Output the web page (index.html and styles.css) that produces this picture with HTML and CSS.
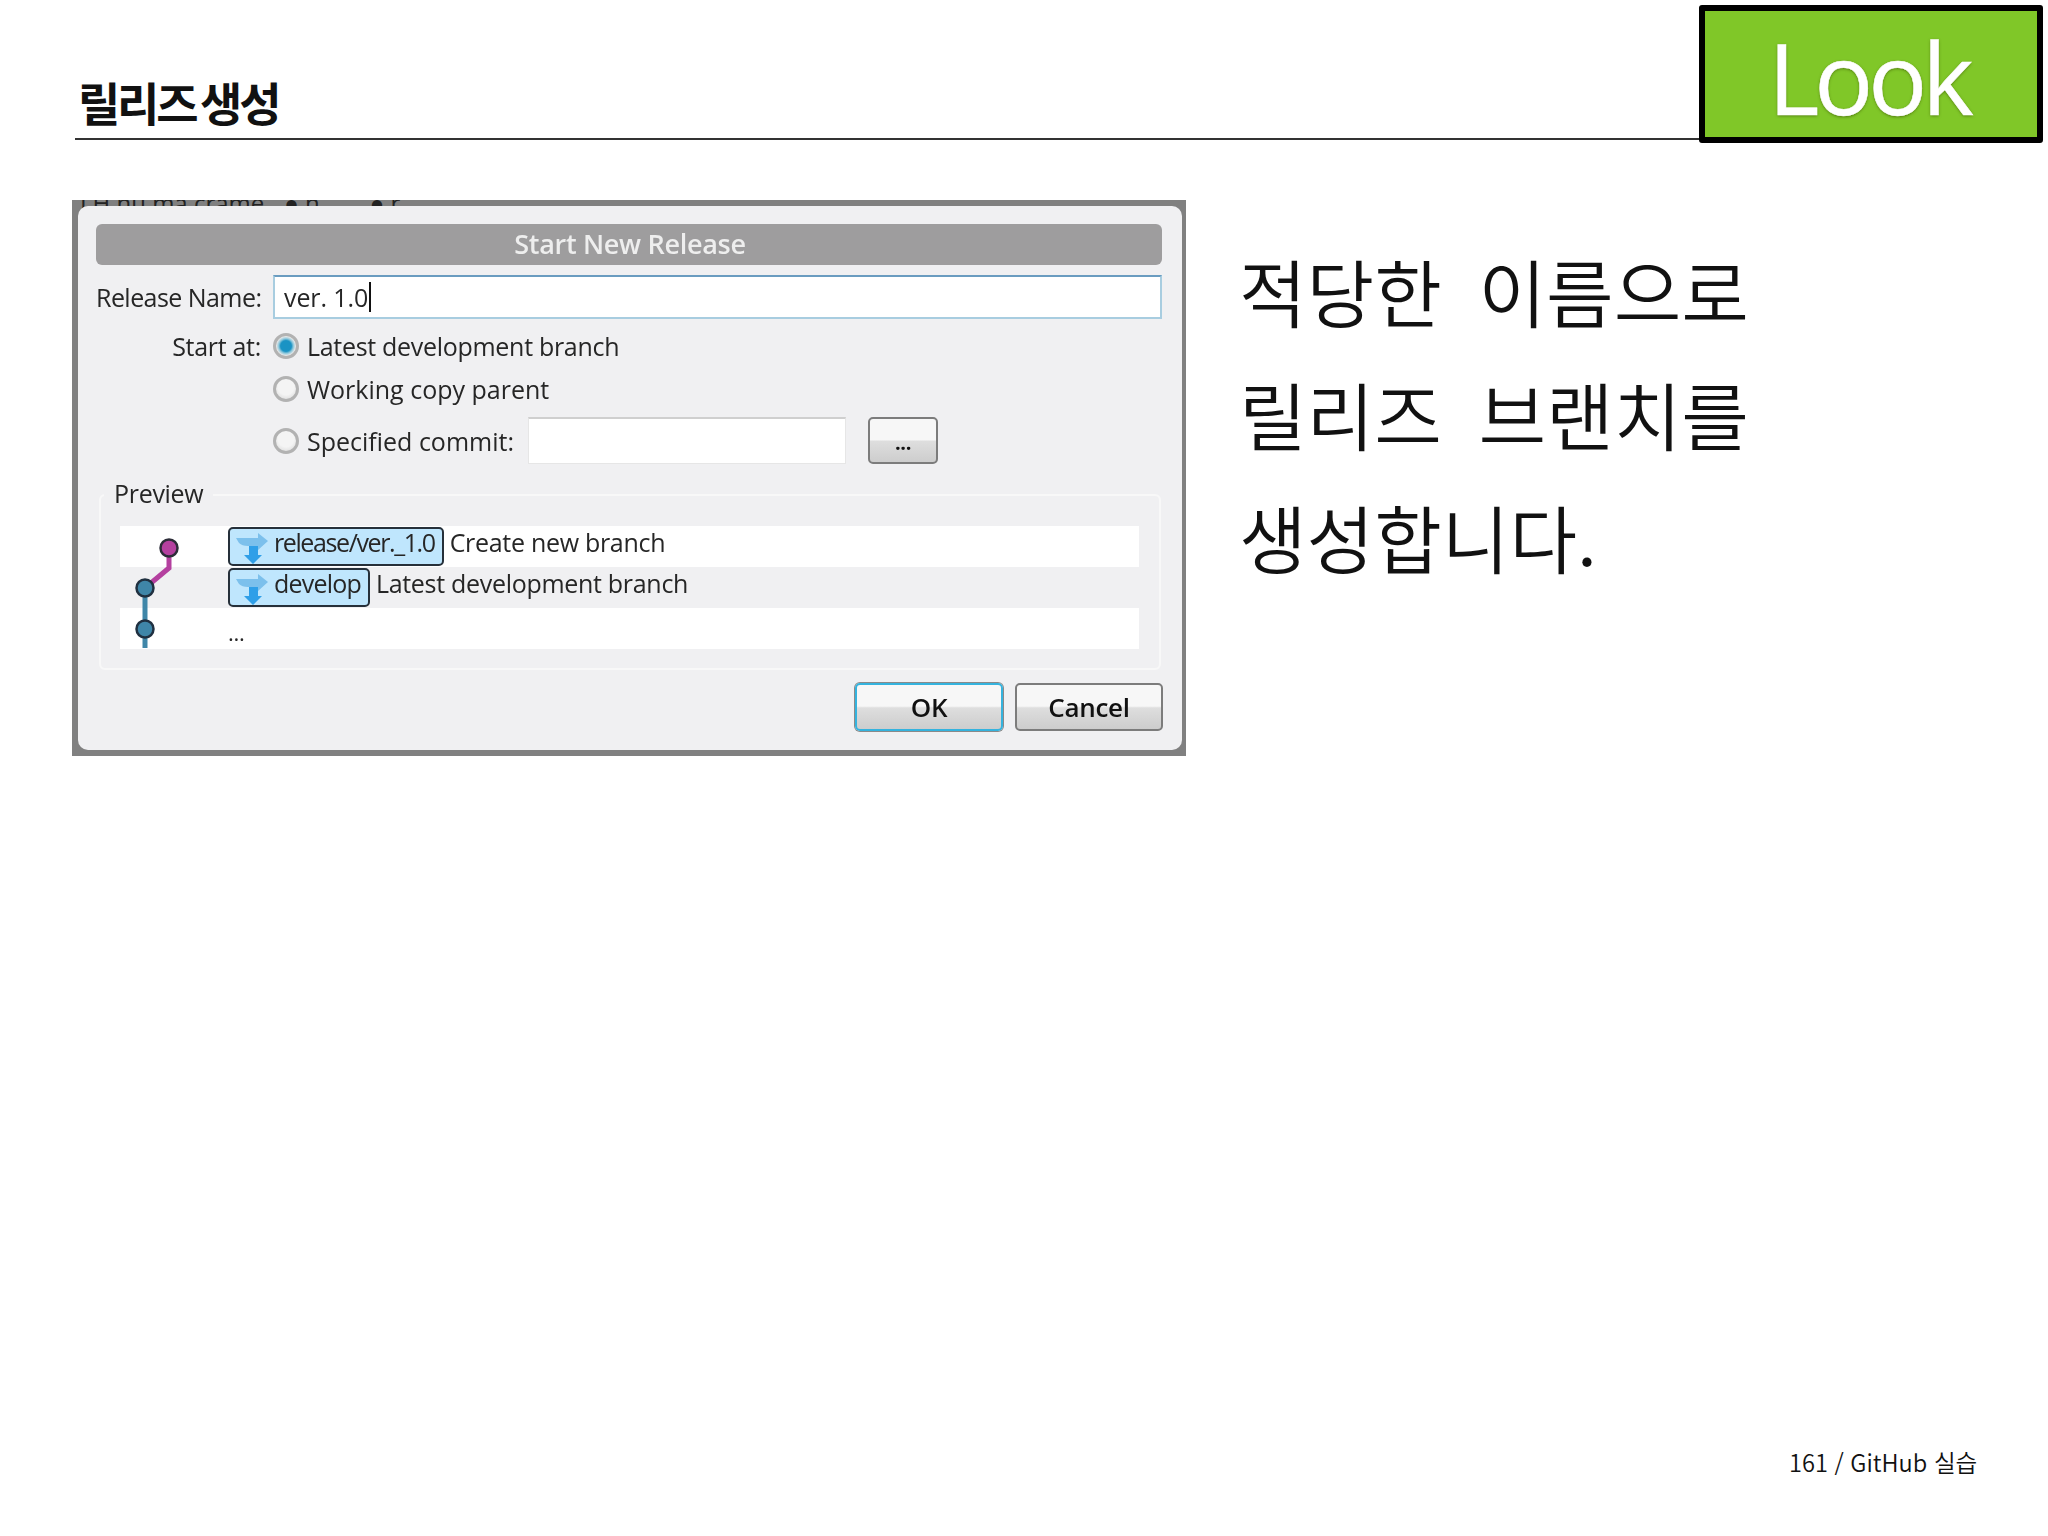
FILE: index.html
```html
<!DOCTYPE html>
<html lang="ko">
<head>
<meta charset="utf-8">
<title>릴리즈 생성</title>
<link rel="stylesheet" href="styles.css">
</head>
<body>
<div class="slide">
  <header class="head">
    <div class="head-title"><h1>릴리즈 생성</h1></div>
    <div class="look">Look</div>
  </header>
  <main class="content">
    <section class="shot">
      <div class="behind"><span>LH nu ma crame</span><span class="dot1">&#9679; n</span><span class="dot2">&#9679; r</span></div>
      <div class="dialog">
        <div class="titlebar">Start New Release</div>
        <div class="row name-row">
          <span class="label snug">Release Name:</span>
          <div class="field focus"><span class="value">ver. 1.0</span><i class="caret"></i></div>
        </div>
        <div class="row start-row">
          <span class="label">Start at:</span>
          <span class="radio on"></span><span>Latest development branch</span>
        </div>
        <div class="row work-row">
          <span class="label"></span>
          <span class="radio"></span><span class="wide">Working copy parent</span>
        </div>
        <div class="row spec-row">
          <span class="label"></span>
          <span class="radio"></span><span class="wide">Specified commit:</span>
          <div class="field spec"></div>
          <div class="btn dots">...</div>
        </div>
        <fieldset class="preview">
          <legend>Preview</legend>
          <div class="rows">
            <svg class="graph" width="70" height="122" viewBox="0 0 70 122">
              <path d="M49 22V42L25 62" fill="none" stroke="#b4409f" stroke-width="5"/>
              <path d="M25 62V122" fill="none" stroke="#3f86a8" stroke-width="5"/>
              <circle cx="49" cy="22" r="8.5" fill="#b4409f" stroke="#2c2c38" stroke-width="2.5"/>
              <circle cx="25" cy="62" r="8.5" fill="#3f86a8" stroke="#203040" stroke-width="2.5"/>
              <circle cx="25" cy="103" r="8.5" fill="#3f86a8" stroke="#203040" stroke-width="2.5"/>
            </svg>
            <div class="line odd">
              <span class="tag tight">
                <svg class="flow" width="33" height="32" viewBox="0 0 33 32"><path d="M13 12H22V22H26L17 31L8 22H13Z" fill="#2f9fe8"/><path d="M0 5H22V0L32 8L22 17V13H12Q6 13 3 10Z" fill="#7cc0ec"/></svg>
                <span>release/ver._1.0</span>
              </span>
              <span>Create new branch</span>
            </div>
            <div class="line">
              <span class="tag">
                <svg class="flow" width="33" height="32" viewBox="0 0 33 32"><path d="M13 12H22V22H26L17 31L8 22H13Z" fill="#2f9fe8"/><path d="M0 5H22V0L32 8L22 17V13H12Q6 13 3 10Z" fill="#7cc0ec"/></svg>
                <span>develop</span>
              </span>
              <span>Latest development branch</span>
            </div>
            <div class="line odd"><span class="more">...</span></div>
          </div>
        </fieldset>
        <div class="actions">
          <div class="btn ok">OK</div>
          <div class="btn">Cancel</div>
        </div>
      </div>
    </section>
    <section class="note">
      <p>적당한 이름으로</p>
      <p>릴리즈 브랜치를</p>
      <p>생성합니다.</p>
    </section>
  </main>
  <footer class="foot">161 / GitHub 실습</footer>
</div>
</body>
</html>
```
FILE: styles.css
```css
* { box-sizing: border-box; }
html, body { margin: 0; background: #fff; }
body { font-family: "Noto Sans CJK KR", "Noto Sans", sans-serif; color: #111; }
.slide { width: 2048px; height: 1536px; display: flex; flex-direction: column; overflow: hidden; }

.head { display: flex; align-items: flex-end; padding: 5px 5px 0 75px; height: 143px; flex: none; }
.head-title { flex: 1; height: 136px; display: flex; align-items: flex-end; border-bottom: 2px solid #333; margin-bottom: 3px; padding-left: 3px; }
.head-title h1 { margin: 0 0 4px; font-size: 46px; font-weight: 700; letter-spacing: -3.2px; word-spacing: -5px; line-height: 66px; color: #111; }
.look { width: 344px; height: 138px; padding-right: 5px; background: #80c728; border: 6px solid #000; border-radius: 3px; color: #fff; font-family: "Open Sans", sans-serif; font-size: 98px; line-height: 132px; text-align: center; letter-spacing: -5px; -webkit-text-stroke: .5px #fff; text-shadow: 0 1px 3px rgba(60,90,0,.7); }

.content { display: flex; flex: 1; padding: 57px 0 0 72px; align-items: flex-start; }
.shot { width: 1114px; height: 556px; background: #808080; padding: 6px 4px 6px 6px; position: relative; overflow: hidden; flex: none; }
.behind { position: absolute; left: 8px; top: -14px; display: flex; font: 24px "Open Sans", sans-serif; color: #222; white-space: nowrap; }
.dot1 { margin-left: 20px; }
.dot2 { margin-left: 50px; }
.dialog { height: 100%; background: #f0f0f2; border-radius: 10px; padding: 18px 20px 0 18px; font-family: "Open Sans", sans-serif; font-size: 25px; letter-spacing: -.3px; color: #262626; position: relative; display: flex; flex-direction: column; filter: blur(.5px); }

.titlebar { height: 41px; background: #9e9d9e; border-radius: 6px; color: #eee; font-weight: 600; font-size: 27px; line-height: 39px; text-align: center; padding-left: 2px; flex: none; }
.row { display: flex; align-items: center; white-space: nowrap; flex: none; }
.label { width: 165px; text-align: right; margin-right: 12px; flex: none; }
.snug { letter-spacing: -.55px; }
.wide { letter-spacing: 0; }
.value { letter-spacing: -.1px; }
.name-row { height: 44px; margin-top: 10px; }
.field { background: #fff; height: 100%; }
.field.focus { width: 891px; border: 2px solid #a8cde0; border-top-color: #6a9cc0; padding-left: 9px; display: flex; align-items: center; }
.caret { width: 2px; height: 30px; background: #111; margin-left: 1px; }
.start-row { height: 38px; margin-top: 8px; }
.work-row { height: 38px; margin-top: 5px; }
.spec-row { height: 47px; margin-top: 9px; }
.radio { width: 26px; height: 26px; margin-right: 8px; border-radius: 50%; border: 3px solid #b2b2b2; background: radial-gradient(circle at 50% 40%, #f4f4f4 0 50%, #d4d4d4 100%); flex: none; }
.radio.on { background: radial-gradient(circle, #1a93c4 0 38%, #8fc8dc 52%, #e8e8e8 68%); }
.spec { width: 318px; margin-left: 14px; border: 1px solid #e6e6e6; border-top: 2px solid #cfcfcf; }
.btn { width: 148px; height: 48px; border: 2px solid #7c7c7c; border-radius: 5px; background: linear-gradient(#f7f7f7 0 48%, #dedede 52%, #cdcdcd 100%); color: #111; font-weight: 600; text-align: center; line-height: 44px; font-size: 26px; }
.btn.dots { width: 70px; height: 47px; margin-left: 22px; line-height: 48px; font-size: 20px; font-weight: 700; }
.btn.ok { border-color: #35b3de; box-shadow: 0 0 0 1px #8a8a8a; }

.preview { margin: 16px 1px 0 3px; padding: 16px 20px 18px 19px; border: 2px solid #f8f8f8; border-radius: 6px; height: 190px; flex: none; min-width: 0; }
.preview legend { padding: 0 10px 4px; margin-left: -16px; line-height: 26px; }
.rows { position: relative; }
.graph { position: absolute; left: 0; top: 0; }
.line { height: 41px; padding-left: 108px; display: flex; align-items: center; gap: 6px; white-space: nowrap; }
.line.odd { background: #fff; }
.tag { height: 39px; display: flex; align-items: flex-start; gap: 5px; padding: 1px 7px 0 6px; background: #bfe6fd; border: 2px solid #26303a; border-radius: 5px; line-height: 25px; letter-spacing: -.8px; position: relative; z-index: 1; }
.tag.tight { letter-spacing: -1.4px; }
.flow { flex: none; margin-top: 3px; }
.line > span:not(.tag) { position: relative; margin-top: -9px; }
.more { font-size: 22px; margin-top: 6px !important; }

.actions { display: flex; justify-content: flex-end; gap: 12px; margin-top: 13px; margin-right: -1px; }

.note { margin: 0 0 0 53px; font-weight: 350; font-size: 73.5px; line-height: 123px; color: #111; padding-top: 29px; }
.note p { margin: 0; word-spacing: 16px; white-space: nowrap; }

.foot { flex: none; height: 70px; margin-bottom: 36px; padding-left: 1789px; font-size: 23.6px; font-weight: 350; line-height: 64px; color: #111; white-space: nowrap; }
```
